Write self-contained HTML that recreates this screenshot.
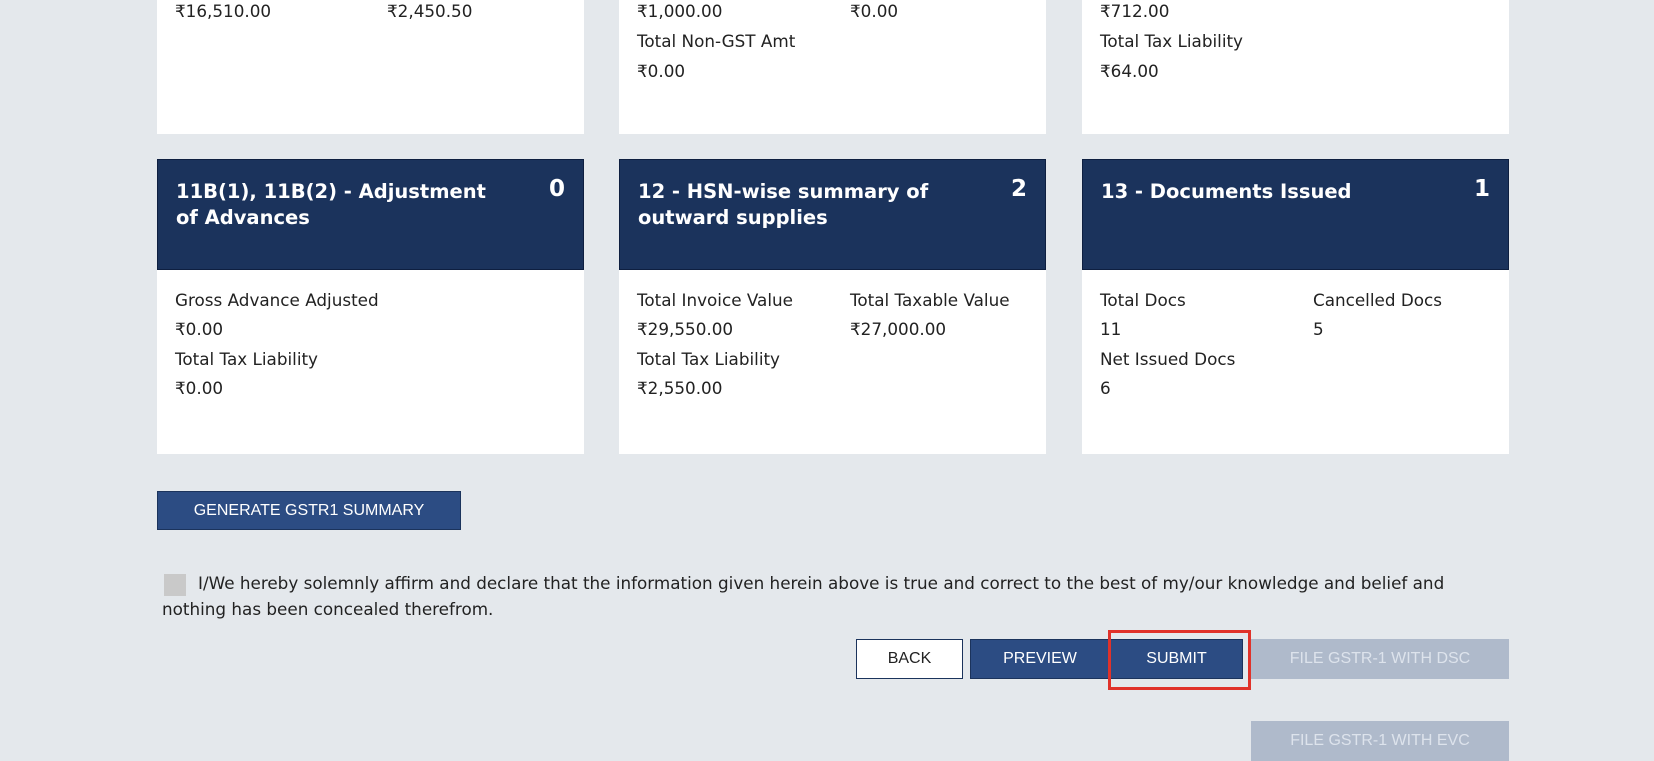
<!DOCTYPE html>
<html><head><meta charset="utf-8"><style>
*{margin:0;padding:0;box-sizing:border-box}
body{width:1654px;height:761px;background:#e4e8ec;font-family:"DejaVu Sans","Liberation Sans",sans-serif;font-size:16.8px;color:#222;position:relative;overflow:hidden}
.card{position:absolute;background:#fff;width:427px}
.hd{position:absolute;left:0;top:0;width:427px;height:111px;background:#1b335c;border:1px solid #0e1f40;color:#fff;font-weight:bold;font-size:19.5px;line-height:26px;padding:19px 40px 0 18px;white-space:nowrap}
.hd .n{position:absolute;right:18px;top:16px;font-size:23px}
.t{position:absolute;white-space:nowrap}
.btn{position:absolute;display:flex;align-items:center;justify-content:center;font-family:"Liberation Sans",sans-serif;font-size:16px;color:#fff}
</style></head><body>
<div class="card" style="left:157px;top:0;height:134px">
<div class="t" style="left:18px;top:1px">₹16,510.00</div><div class="t" style="left:230px;top:1px">₹2,450.50</div></div>
<div class="card" style="left:619px;top:0;height:134px">
<div class="t" style="left:18px;top:1px">₹1,000.00</div><div class="t" style="left:231px;top:1px">₹0.00</div>
<div class="t" style="left:18px;top:31px">Total Non-GST Amt</div><div class="t" style="left:18px;top:61px">₹0.00</div></div>
<div class="card" style="left:1082px;top:0;height:134px">
<div class="t" style="left:18px;top:1px">₹712.00</div>
<div class="t" style="left:18px;top:31px">Total Tax Liability</div><div class="t" style="left:18px;top:61px">₹64.00</div></div>

<div class="card" style="left:157px;top:159px;height:295px">
<div class="hd">11B(1), 11B(2) - Adjustment<br>of Advances<span class="n">0</span></div>
<div class="t" style="left:18px;top:131px">Gross Advance Adjusted</div>
<div class="t" style="left:18px;top:160px">₹0.00</div>
<div class="t" style="left:18px;top:190px">Total Tax Liability</div>
<div class="t" style="left:18px;top:219px">₹0.00</div></div>
<div class="card" style="left:619px;top:159px;height:295px">
<div class="hd">12 - HSN-wise summary of<br>outward supplies<span class="n">2</span></div>
<div class="t" style="left:18px;top:131px">Total Invoice Value</div><div class="t" style="left:231px;top:131px">Total Taxable Value</div>
<div class="t" style="left:18px;top:160px">₹29,550.00</div><div class="t" style="left:231px;top:160px">₹27,000.00</div>
<div class="t" style="left:18px;top:190px">Total Tax Liability</div>
<div class="t" style="left:18px;top:219px">₹2,550.00</div></div>
<div class="card" style="left:1082px;top:159px;height:295px">
<div class="hd">13 - Documents Issued<span class="n">1</span></div>
<div class="t" style="left:18px;top:131px">Total Docs</div><div class="t" style="left:231px;top:131px">Cancelled Docs</div>
<div class="t" style="left:18px;top:160px">11</div><div class="t" style="left:231px;top:160px">5</div>
<div class="t" style="left:18px;top:190px">Net Issued Docs</div>
<div class="t" style="left:18px;top:219px">6</div></div>

<div class="btn" style="left:157px;top:491px;width:304px;height:39px;background:#2c4c83;border:1px solid #1b335c">GENERATE GSTR1 SUMMARY</div>

<div style="position:absolute;left:164px;top:574px;width:22px;height:22px;background:#c9c9c9"></div>
<div class="t" style="left:198px;top:573px">I/We hereby solemnly affirm and declare that the information given herein above is true and correct to the best of my/our knowledge and belief and</div>
<div class="t" style="left:162px;top:599px">nothing has been concealed therefrom.</div>

<div class="btn" style="left:856px;top:639px;width:107px;height:40px;background:#fff;border:1px solid #1b335c;color:#222">BACK</div>
<div class="btn" style="left:970px;top:639px;width:140px;height:40px;background:#2c4c83;border:1px solid #1b335c">PREVIEW</div>
<div class="btn" style="left:1110px;top:639px;width:133px;height:40px;background:#2c4c83;border:1px solid #1b335c">SUBMIT</div>
<div style="position:absolute;left:1108px;top:630px;width:143px;height:60px;border:3px solid #e0322a"></div>
<div class="btn" style="left:1251px;top:639px;width:258px;height:40px;background:#afbacb;color:#dde3ec">FILE GSTR-1 WITH DSC</div>
<div class="btn" style="left:1251px;top:721px;width:258px;height:40px;background:#afbacb;color:#dde3ec">FILE GSTR-1 WITH EVC</div>
</body></html>
